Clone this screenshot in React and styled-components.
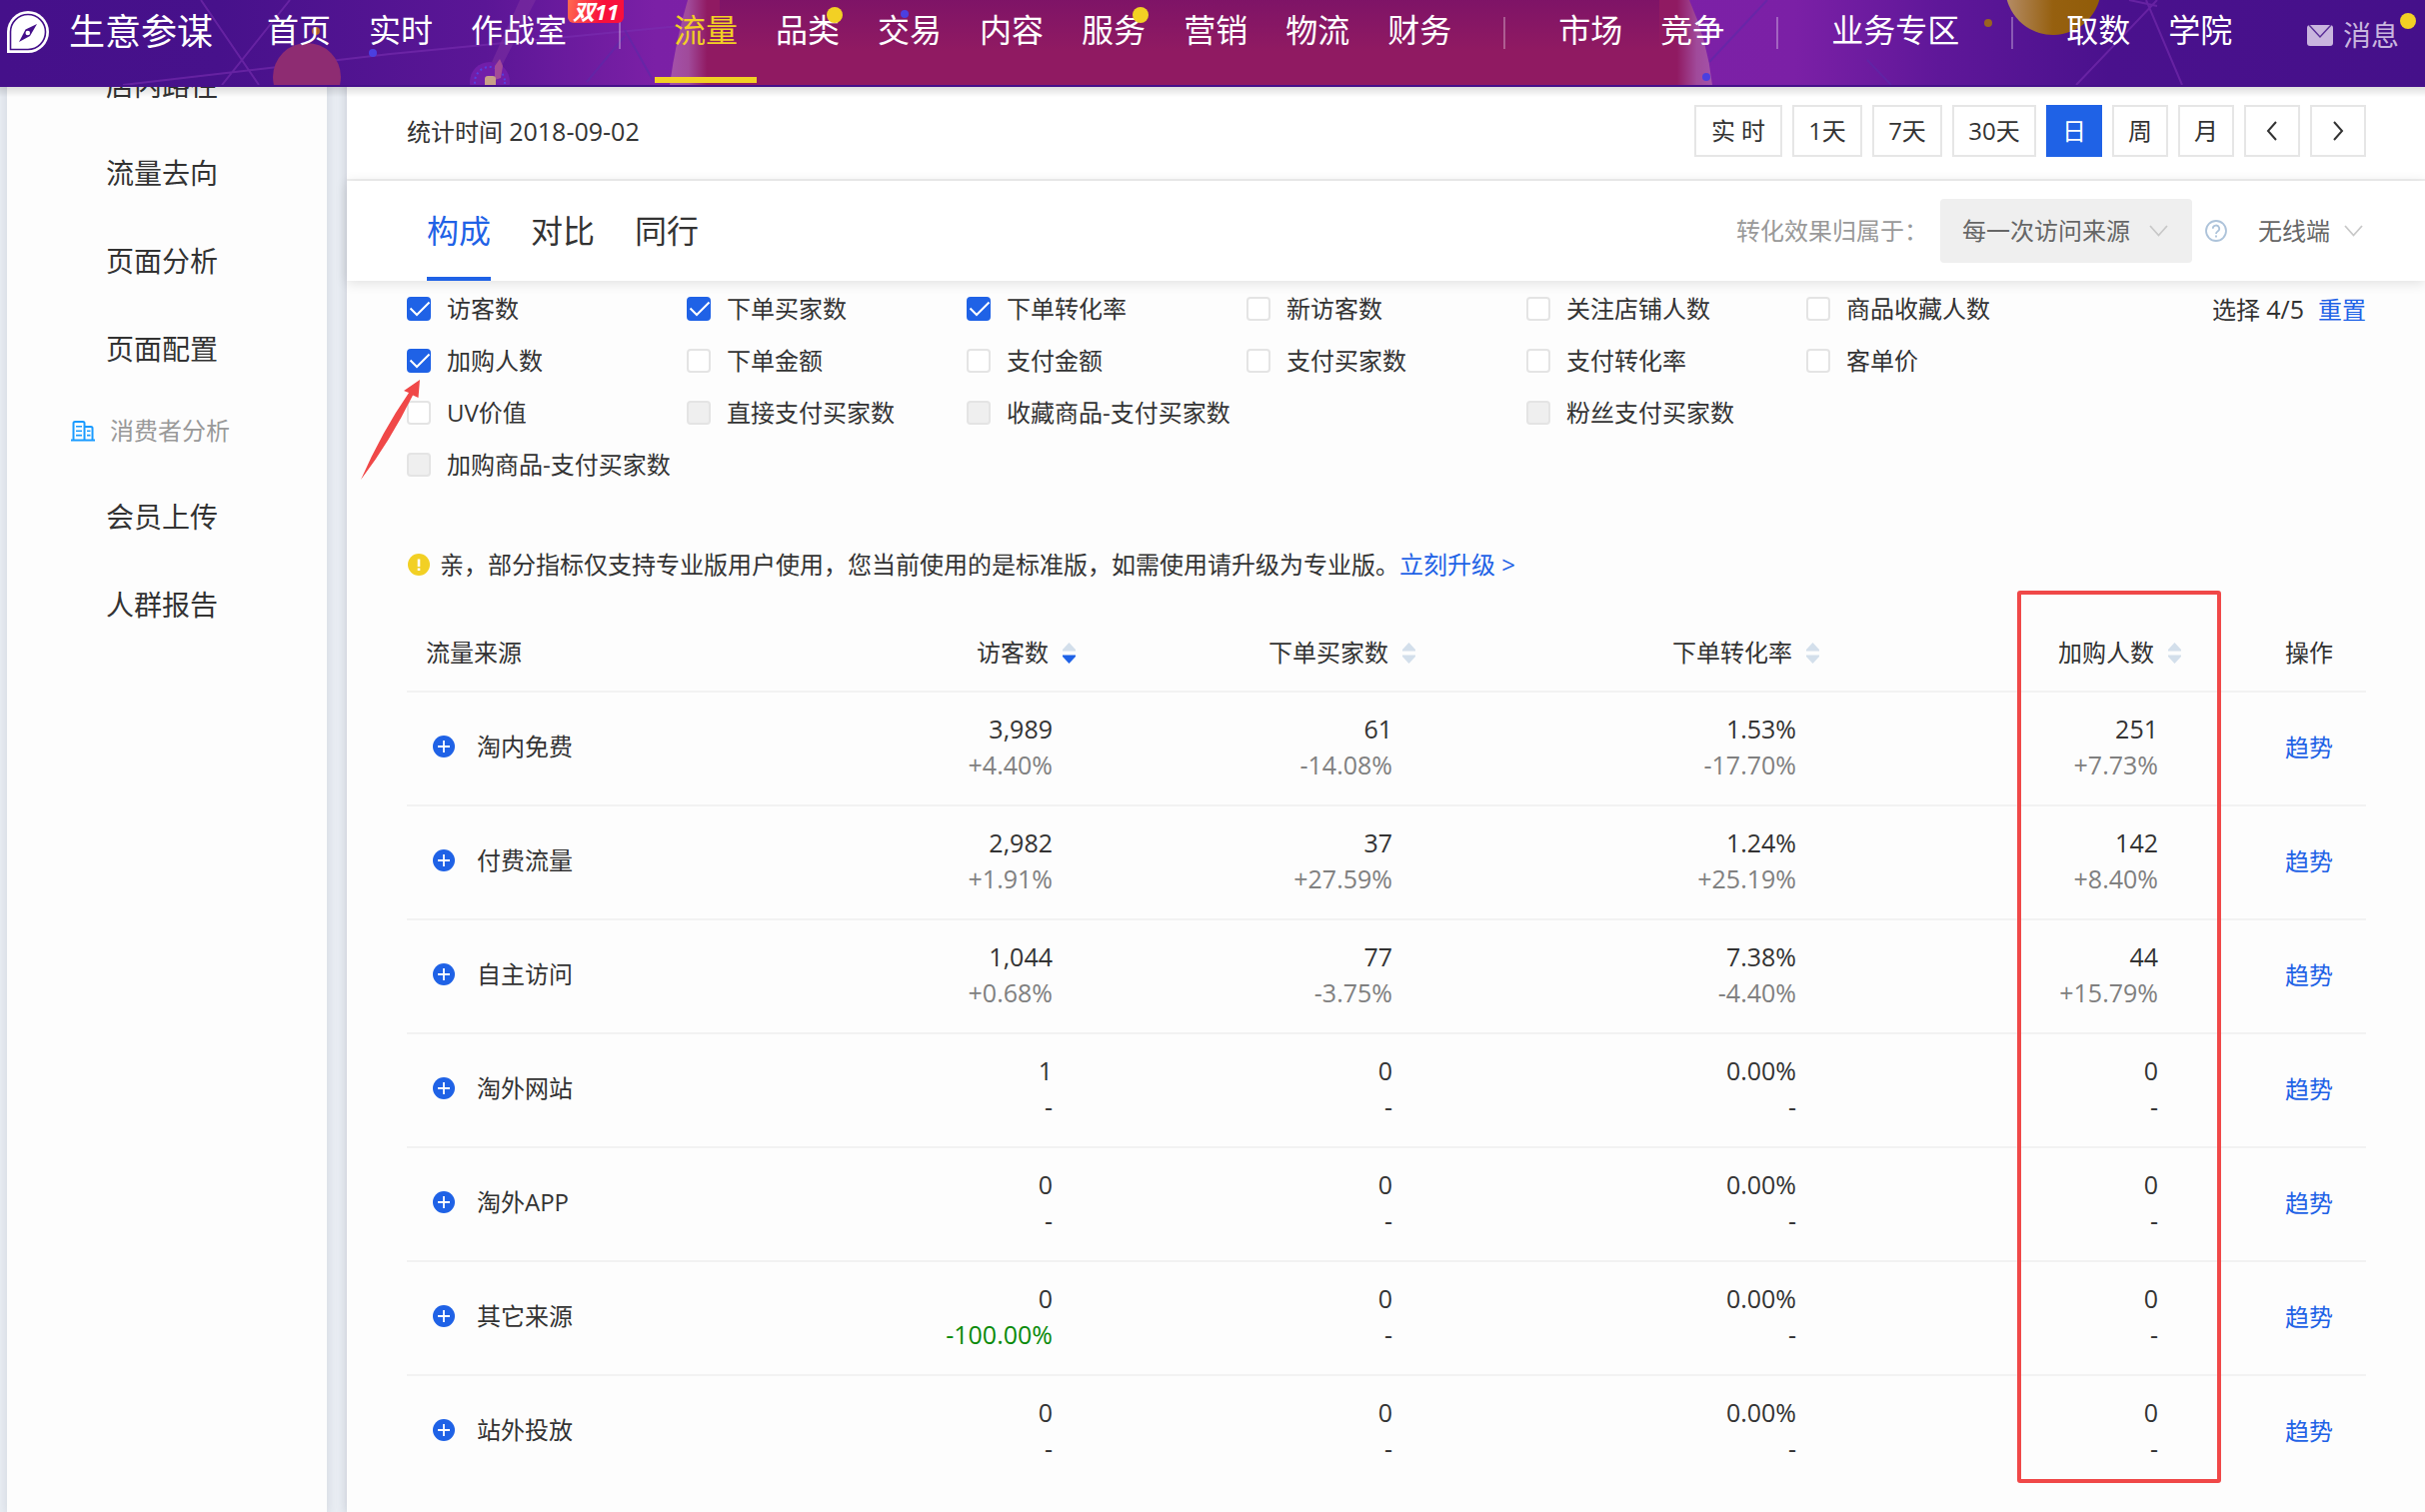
import React from "react";
import styled, { createGlobalStyle, css } from "styled-components";

const BLUE = "#1f62e6";
const RED = "#f04848";
const YELLOW = "#f2d024";

const GlobalStyle = createGlobalStyle`
  *, *::before, *::after { box-sizing: border-box; }
  body {
    margin: 0;
    background: #e9edf3;
    color: #333;
    font-family: "Open Sans", "Noto Sans CJK SC", sans-serif;
    font-size: 24px;
    line-height: 36px;
  }
  button, select, input { font: inherit; color: inherit; margin: 0; }
  button { cursor: pointer; }
`;

/* ---------- header ---------- */

const Header = styled.header`
  position: fixed;
  inset: 0 0 auto 0;
  z-index: 10;
  display: flex;
  align-items: flex-start;
  height: 87px;
  overflow: hidden;
  background: #45108a;
  border-bottom: 2px solid #45108a;
`;

const HeaderShade = styled.div`
  position: fixed;
  inset: 87px 0 auto 0;
  z-index: 9;
  height: 10px;
  background: linear-gradient(rgba(0, 0, 0, 0.13), rgba(0, 0, 0, 0));
`;

const HeaderArt = styled.svg`
  position: absolute;
  inset: 0;
  width: 100%;
  height: 85px;
`;

const Brand = styled.a`
  position: relative;
  display: flex;
  gap: 20px;
  padding-left: 7px;
  width: 248px;
  color: #fff;
  font-size: 36px;
  line-height: 64px;
  text-decoration: none;

  svg {
    margin-top: 11px;
    width: 42px;
    height: 42px;
  }
`;

const Nav = styled.nav`
  position: relative;
  display: flex;
`;

const NavGroup = styled.div`
  display: flex;
  & + &::before {
    content: "";
    width: 2px;
    height: 32px;
    margin: 17px 34px 0 33px;
    background: rgba(255, 255, 255, 0.3);
  }
`;

const NavLink = styled.a`
  position: relative;
  height: 83px;
  padding: 0 19px;
  font-size: 32px;
  line-height: 60px;
  color: ${(p) => (p.$active ? YELLOW : "#fff")};
  border-bottom: 6px solid ${(p) => (p.$active ? YELLOW : "transparent")};
  text-decoration: none;
  white-space: nowrap;
`;

const Dot = styled.i`
  position: absolute;
  top: ${(p) => (p.$low ? 13 : 7)}px;
  right: ${(p) => (p.$low ? -17 : 16)}px;
  width: 16px;
  height: 16px;
  border-radius: 50%;
  background: ${YELLOW};
`;

const SaleTag = styled.span`
  position: absolute;
  top: 0;
  right: -38px;
  width: 56px;
  height: 23px;
  border-radius: 0 0 6px 6px;
  background: linear-gradient(100deg, #ff6a50, #f8103c 60%);
  color: #fff;
  font-size: 22px;
  font-weight: 700;
  font-style: italic;
  line-height: 22px;
  text-align: center;
`;

const Message = styled.a`
  position: relative;
  display: flex;
  align-items: center;
  gap: 10px;
  height: 70px;
  margin: 0 26px 0 auto;
  color: #c9b5de;
  font-size: 28px;
  text-decoration: none;

  svg { width: 26px; height: 21px; }
`;

/* ---------- page ---------- */

const Page = styled.div`
  display: flex;
  gap: 20px;
  min-height: 100vh;
  padding-left: 7px;
`;

const Sidebar = styled.aside`
  flex: 0 0 320px;
  padding-top: 41px;
  background: #fdfdfd;
  box-shadow: 0 0 10px rgba(60, 70, 90, 0.14);
`;

const SideLink = styled.a`
  display: block;
  padding-left: 99px;
  color: #333;
  font-size: 28px;
  line-height: 88px;
  text-decoration: none;
`;

const SideHeading = styled.h2`
  display: flex;
  align-items: center;
  gap: 15px;
  height: 80px;
  margin: 0;
  padding: 0 0 4px 64px;
  color: #999;
  font-size: 24px;
  font-weight: 400;

  svg { width: 24px; height: 22px; }
`;

const Main = styled.main`
  flex: 1;
  min-width: 0;
  padding-top: 87px;
  background: #fdfdfd;
  box-shadow: 0 0 10px rgba(60, 70, 90, 0.22);
`;

const DateBar = styled.div`
  display: flex;
  align-items: center;
  justify-content: space-between;
  height: 94px;
  padding: 0 59px 4px 60px;
  background: #fff;
  border-bottom: 2px solid #f0f0f0;
`;

const Figure = styled.span`
  font-size: 25px;
`;

const ButtonRow = styled.div`
  display: flex;
  gap: 10px;
`;

const RangeButton = styled.button`
  display: flex;
  align-items: center;
  justify-content: center;
  width: ${(p) => p.$width}px;
  height: 52px;
  padding: 0;
  white-space: nowrap;
  background: ${(p) => (p.$active ? BLUE : "#fff")};
  color: ${(p) => (p.$active ? "#fff" : "#333")};
  border: 2px solid ${(p) => (p.$active ? BLUE : "#e6e6e6")};

  svg { width: 12px; height: 20px; }
`;

const TabBar = styled.div`
  position: relative;
  display: flex;
  justify-content: space-between;
  height: 100px;
  padding: 0 59px 0 80px;
  background: #fff;
  box-shadow: 0 2px 12px rgba(0, 0, 0, 0.12);
`;

const Tabs = styled.div`
  display: flex;
  gap: 40px;
`;

const Tab = styled.button`
  height: 100px;
  padding: 4px 0 0;
  background: none;
  border: 0;
  border-bottom: 4px solid ${(p) => (p.$active ? BLUE : "transparent")};
  color: ${(p) => (p.$active ? BLUE : "#333")};
  font-size: 32px;
`;

const Attribution = styled.div`
  display: flex;
  align-items: center;
  color: #999;

  > svg { width: 22px; height: 22px; margin: 0 9px 0 13px; }
`;

const SelectBox = styled.span`
  position: relative;
  display: flex;
  align-items: center;
  margin-left: ${(p) => (p.$filled ? 12 : 0)}px;

  select {
    appearance: none;
    width: ${(p) => (p.$filled ? 252 : 130)}px;
    height: 64px;
    padding: 0 22px;
    border: 0;
    border-radius: 4px;
    background: ${(p) => (p.$filled ? "#efefef" : "transparent")};
    color: #666;
  }
  svg {
    position: absolute;
    right: ${(p) => (p.$filled ? 24 : 3)}px;
    width: 19px;
    height: 12px;
    pointer-events: none;
  }
`;

const Content = styled.div`
  padding: 2px 59px 24px 60px;
`;

const Filters = styled.div`
  display: flex;
  justify-content: space-between;
`;

const FilterGrid = styled.div`
  display: grid;
  grid-template-columns: repeat(6, 280px);
`;

const Option = styled.label`
  display: flex;
  align-items: center;
  gap: 16px;
  height: 52px;
  white-space: nowrap;
  ${(p) => p.$wide && css`grid-column: span 2;`}
`;

const CheckWrap = styled.span`
  display: grid;

  input, svg {
    grid-area: 1 / 1;
    width: 24px;
    height: 24px;
  }
  input {
    appearance: none;
    border: 2px solid #e4e4e4;
    border-radius: 4px;
    background: #fff;
  }
  input:disabled { background: #efefef; }
  input:checked { background: ${BLUE}; border-color: ${BLUE}; }
  svg { visibility: hidden; pointer-events: none; }
  input:checked + svg { visibility: visible; }
`;

const Picked = styled.p`
  margin: 0;
  line-height: 52px;
  white-space: nowrap;
`;

const ResetButton = styled.button`
  margin-left: 14px;
  padding: 0;
  border: 0;
  background: none;
  color: ${BLUE};
`;

const Notice = styled.p`
  display: flex;
  align-items: center;
  margin: 56px 0 32px;

  svg { width: 22px; height: 22px; margin: 0 10px 0 1px; }
`;

const Link = styled.a`
  color: ${BLUE};
  text-decoration: none;
`;

const TableWrap = styled.div`
  position: relative;
`;

const Col = styled.col`
  width: ${(p) => p.$width}px;
`;

const Table = styled.table`
  width: 100%;
  table-layout: fixed;
  border-collapse: separate;
  border-spacing: 0;

  th {
    height: 78px;
    padding: 0;
    font-weight: 400;
    text-align: right;
    border-bottom: 2px solid #f2f2f2;
  }
  td {
    height: 114px;
    padding: 18px 39px 22px 0;
    text-align: right;
    border-bottom: 2px solid #f2f2f2;
  }
  tbody tr:last-child td { border-bottom-color: transparent; }
  th:first-child { padding-left: 19px; text-align: left; }
  td:first-child { padding: 18px 0 22px 26px; text-align: left; }
  td:last-child { padding-bottom: 20px; }
  th:last-child, td:last-child { padding-right: 33px; }
`;

const SortButton = styled.button`
  display: inline-flex;
  align-items: center;
  gap: 14px;
  padding: 0;
  margin-right: 16px;
  border: 0;
  background: none;
  white-space: nowrap;

  svg { width: 13px; height: 21px; }
`;

const SourceName = styled.span`
  display: flex;
  align-items: center;
  gap: 22px;
`;

const ExpandButton = styled.button`
  display: flex;
  padding: 0;
  border: 0;
  background: none;

  svg { width: 22px; height: 22px; }
`;

const Value = styled.div`
  color: #333;
  font-size: 25px;
`;

const CHANGE_COLORS = { drop: "#0a8a0a", none: "#333", normal: "#808080" };

const Change = styled.div`
  color: ${(p) => CHANGE_COLORS[p.$tone]};
  font-size: 25px;
`;

const Highlight = styled.div`
  position: absolute;
  top: -24px;
  right: 145px;
  bottom: 7px;
  width: 204px;
  border: 4px solid ${RED};
  border-radius: 3px;
  pointer-events: none;
`;

const ArrowMark = styled.svg`
  position: absolute;
  top: 380px;
  left: 360px;
  z-index: 2;
  width: 62px;
  height: 101px;
  pointer-events: none;
`;

/* ---------- icons ---------- */

const Compass = () => (
  <svg viewBox="0 0 42 42" aria-hidden="true">
    <path d="M21 0a21 21 0 1 1 0 42H0V21A21 21 0 0 1 21 0z" fill="#fff" />
    <path d="M21 3.500a17.500 17.500 0 1 1 0 35H3.500V21A17.500 17.500 0 0 1 21 3.500z" fill="none" stroke="#45108a" strokeWidth="1.600" />
    <path d="M30 13 23 25 12 31 18.500 18.500z" fill="#45108a" />
    <circle cx="20.800" cy="22" r="2.300" fill="#fff" />
  </svg>
);

const Envelope = () => (
  <svg viewBox="0 0 26 21" aria-hidden="true">
    <rect width="26" height="21" rx="3" fill="#c9b5de" />
    <path d="M2 0 13 12 24 0" fill="none" stroke="#5b2f98" strokeWidth="1.500" />
  </svg>
);

const Building = () => (
  <svg viewBox="0 0 24 22" fill="none" stroke="#1a9bff" strokeWidth="2" aria-hidden="true">
    <path d="M0 20.500h24M2.500 20V3.500a1.500 1.500 0 0 1 1.500-1.500h8a1.500 1.500 0 0 1 1.500 1.500V20M13.500 7h6.500a1.500 1.500 0 0 1 1.500 1.500V20" />
    <path d="M5 6.800h6M5 11.200h6M5 15.600h6M16 11.200h3.500M16 15.600h3.500" strokeWidth="1.600" />
  </svg>
);

const Chevron = () => (
  <svg viewBox="0 0 19 12" fill="none" stroke="#c8c8c8" strokeWidth="1.800" aria-hidden="true">
    <path d="M1 1l8.500 9.500L18 1" />
  </svg>
);

const Step = ({ next }) => (
  <svg viewBox="0 0 12 20" fill="none" stroke="#333" strokeWidth="2" aria-hidden="true">
    <path d={next ? "M2 1l8 9-8 9" : "M10 1 2 10l8 9"} />
  </svg>
);

const Help = () => (
  <svg viewBox="0 0 22 22" fill="none" stroke="#adc3da" strokeWidth="1.800" aria-hidden="true">
    <circle cx="11" cy="11" r="10" />
    <path d="M7.800 8.800a3.200 3.200 0 1 1 4.800 2.700c-1.100.7-1.600 1.200-1.600 2.500M11 15.500v2" />
  </svg>
);

const Warn = () => (
  <svg viewBox="0 0 22 22" aria-hidden="true">
    <circle cx="11" cy="11" r="11" fill={YELLOW} />
    <path d="M11 5.500v7.500M11 14.500v2.500" stroke="#fff" strokeWidth="2.600" />
  </svg>
);

const Plus = () => (
  <svg viewBox="0 0 22 22" aria-hidden="true">
    <circle cx="11" cy="11" r="11" fill={BLUE} />
    <path d="M11 5v12M5 11h12" stroke="#fff" strokeWidth="1.800" />
  </svg>
);

const Tick = () => (
  <svg viewBox="0 0 24 24" fill="none" stroke="#fff" strokeWidth="2" aria-hidden="true">
    <path d="M3.500 11.500 10 18 22.500 5.500" />
  </svg>
);

const SortMark = ({ down }) => (
  <svg viewBox="0 0 13 21" aria-hidden="true">
    <path d="M6.500 0 13 7v1.500H0V7z" fill="#d3dfeb" />
    <path d="M6.500 21 13 14v-1.500H0V14z" fill={down ? BLUE : "#d3dfeb"} />
  </svg>
);

const Backdrop = () => (
  <HeaderArt viewBox="0 0 2426 85" preserveAspectRatio="none" aria-hidden="true">
    <defs>
      <linearGradient id="sky" x1="0" x2="1" y1="0" y2="0">
        <stop offset="0" stopColor="#45108a" />
        <stop offset="0.090" stopColor="#47118b" />
        <stop offset="0.200" stopColor="#5b1696" />
        <stop offset="0.270" stopColor="#7b20a6" />
        <stop offset="0.500" stopColor="#8222a8" />
        <stop offset="0.740" stopColor="#7b20a6" />
        <stop offset="0.800" stopColor="#5f1799" />
        <stop offset="0.870" stopColor="#4a118d" />
        <stop offset="1" stopColor="#45108a" />
      </linearGradient>
      <linearGradient id="disc" x1="0" x2="1" y1="0" y2="0">
        <stop offset="0" stopColor="#a452aa" />
        <stop offset="0.018" stopColor="#a04a9a" />
        <stop offset="0.036" stopColor="#901a62" />
        <stop offset="0.966" stopColor="#901a62" />
        <stop offset="0.985" stopColor="#a04a9a" />
        <stop offset="1" stopColor="#a452aa" />
      </linearGradient>
      <linearGradient id="discTop" x1="0" x2="0" y1="0" y2="1">
        <stop offset="0" stopColor="#7a1268" stopOpacity="0.800" />
        <stop offset="0.600" stopColor="#7a1268" stopOpacity="0" />
      </linearGradient>
      <linearGradient id="planet" x1="0" x2="1" y1="0" y2="0">
        <stop offset="0" stopColor="#b58d68" />
        <stop offset="0.500" stopColor="#96600f" />
        <stop offset="1" stopColor="#915c08" />
      </linearGradient>
    </defs>
    <rect width="2426" height="85" fill="url(#sky)" />
    <g fill="none" stroke="#7a2fb0" strokeOpacity="0.600" strokeWidth="2">
      <path d="M123 85 390 54 680 26M201 0l58 85M290 0l-68 85M2158 0l-81 85M2147 0l36 85M2130 0l28 6" />
      <path d="M625 30l28 50M625 36l-38 46M1768 0l-58 62M1868 60l24 25" stroke="#5b2aa8" />
    </g>
    <path d="M688 0Q676 40 670 85H1713Q1708 40 1690 0z" fill="url(#disc)" />
    <path d="M720 0H1660V85H720z" fill="url(#discTop)" />
    <circle cx="307" cy="77" r="34" fill="#8e2c72" />
    <path d="M492 62 520 0h16L502 66z" fill="#7c2fa0" fillOpacity="0.600" />
    <circle cx="490" cy="82" r="20" fill="#7a22b0" fillOpacity="0.700" />
    <circle cx="490" cy="82" r="15" fill="none" stroke="#5640e0" strokeWidth="2" strokeDasharray="2 3" />
    <path d="M495 80V66l5-7 3 7-2 12z" fill="#a24a98" />
    <path d="M485 85v-6q0-3 3-3h5q3 0 3 3v6z" fill="#c8a088" />
    <circle cx="373" cy="53" r="4" fill="#4b3fe0" />
    <circle cx="316" cy="31" r="4" fill="#b0642c" />
    <circle cx="905" cy="14" r="4" fill="#4b3fe0" />
    <circle cx="1707" cy="77" r="4" fill="#4b3fe0" />
    <circle cx="1989" cy="23" r="4" fill="#9a6420" />
    <circle cx="2054" cy="-13" r="48" fill="url(#planet)" />
  </HeaderArt>
);

/* ---------- data ---------- */

const NAV = [
  [{ text: "首页" }, { text: "实时" }, { text: "作战室", sale: true }],
  [
    { text: "流量", active: true },
    { text: "品类", dot: true },
    { text: "交易" },
    { text: "内容" },
    { text: "服务", dot: true },
    { text: "营销" },
    { text: "物流" },
    { text: "财务" },
  ],
  [{ text: "市场" }, { text: "竞争" }],
  [{ text: "业务专区" }],
  [{ text: "取数" }, { text: "学院" }],
];

const RANGES = [
  ["实 时", 88],
  ["1天", 70],
  ["7天", 70],
  ["30天", 84],
  ["日", 56],
  ["周", 56],
  ["月", 56],
];

const OPTIONS = [
  { text: "访客数", on: true },
  { text: "下单买家数", on: true },
  { text: "下单转化率", on: true },
  { text: "新访客数" },
  { text: "关注店铺人数" },
  { text: "商品收藏人数" },
  { text: "加购人数", on: true },
  { text: "下单金额" },
  { text: "支付金额" },
  { text: "支付买家数" },
  { text: "支付转化率" },
  { text: "客单价" },
  { text: "UV价值" },
  { text: "直接支付买家数", off: true },
  { text: "收藏商品-支付买家数", off: true, wide: true },
  { text: "粉丝支付买家数", off: true },
  { text: "加购商品-支付买家数", off: true, wide: true },
];

const COLUMNS = ["访客数", "下单买家数", "下单转化率", "加购人数"];

const ROWS = [
  ["淘内免费", ["3,989", "+4.40%"], ["61", "-14.08%"], ["1.53%", "-17.70%"], ["251", "+7.73%"]],
  ["付费流量", ["2,982", "+1.91%"], ["37", "+27.59%"], ["1.24%", "+25.19%"], ["142", "+8.40%"]],
  ["自主访问", ["1,044", "+0.68%"], ["77", "-3.75%"], ["7.38%", "-4.40%"], ["44", "+15.79%"]],
  ["淘外网站", ["1", "-"], ["0", "-"], ["0.00%", "-"], ["0", "-"]],
  ["淘外APP", ["0", "-"], ["0", "-"], ["0.00%", "-"], ["0", "-"]],
  ["其它来源", ["0", "-100.00%"], ["0", "-"], ["0.00%", "-"], ["0", "-"]],
  ["站外投放", ["0", "-"], ["0", "-"], ["0.00%", "-"], ["0", "-"]],
];

const toneOf = (change) => {
  if (change === "-") return "none";
  return change === "-100.00%" ? "drop" : "normal";
};

export default function App() {
  return (
    <>
      <GlobalStyle />
      <Header>
        <Backdrop />
        <Brand href="#home">
          <Compass />
          生意参谋
        </Brand>
        <Nav>
          {NAV.map((group) => (
            <NavGroup key={group[0].text}>
              {group.map((item) => (
                <NavLink key={item.text} href="#nav" $active={item.active}>
                  {item.text}
                  {item.dot && <Dot />}
                  {item.sale && <SaleTag>双11</SaleTag>}
                </NavLink>
              ))}
            </NavGroup>
          ))}
        </Nav>
        <Message href="#messages">
          <Envelope />
          消息
          <Dot $low />
        </Message>
      </Header>
      <HeaderShade />

      <Page>
        <Sidebar>
          {["店内路径", "流量去向", "页面分析", "页面配置"].map((text) => (
            <SideLink key={text} href="#side">{text}</SideLink>
          ))}
          <SideHeading>
            <Building />
            消费者分析
          </SideHeading>
          {["会员上传", "人群报告"].map((text) => (
            <SideLink key={text} href="#side">{text}</SideLink>
          ))}
        </Sidebar>

        <Main>
          <DateBar>
            <span>统计时间 <Figure>2018-09-02</Figure></span>
            <ButtonRow>
              {RANGES.map(([text, width]) => (
                <RangeButton key={text} type="button" $width={width} $active={text === "日"}>
                  {text}
                </RangeButton>
              ))}
              <RangeButton type="button" $width={56} aria-label="上一日"><Step /></RangeButton>
              <RangeButton type="button" $width={56} aria-label="下一日"><Step next /></RangeButton>
            </ButtonRow>
          </DateBar>

          <TabBar>
            <Tabs>
              <Tab type="button" $active>构成</Tab>
              <Tab type="button">对比</Tab>
              <Tab type="button">同行</Tab>
            </Tabs>
            <Attribution>
              <label htmlFor="source">转化效果归属于：</label>
              <SelectBox $filled>
                <select id="source"><option>每一次访问来源</option></select>
                <Chevron />
              </SelectBox>
              <Help />
              <SelectBox>
                <select aria-label="终端"><option>无线端</option></select>
                <Chevron />
              </SelectBox>
            </Attribution>
          </TabBar>

          <Content>
            <Filters>
              <FilterGrid>
                {OPTIONS.map((o) => (
                  <Option key={o.text} $wide={o.wide}>
                    <CheckWrap>
                      <input type="checkbox" defaultChecked={o.on} disabled={o.off} />
                      <Tick />
                    </CheckWrap>
                    {o.text}
                  </Option>
                ))}
              </FilterGrid>
              <Picked>
                选择 <Figure>4/5</Figure>
                <ResetButton type="button">重置</ResetButton>
              </Picked>
            </Filters>

            <Notice>
              <Warn />
              亲，部分指标仅支持专业版用户使用，您当前使用的是标准版，如需使用请升级为专业版。
              <Link href="#upgrade">立刻升级 &gt;</Link>
            </Notice>

            <TableWrap>
              <Table>
                <colgroup>
                  <Col $width={400} />
                  <col />
                  <Col $width={340} />
                  <Col $width={404} />
                  <Col $width={362} />
                  <Col $width={169} />
                </colgroup>
                <thead>
                  <tr>
                    <th>流量来源</th>
                    {COLUMNS.map((text, i) => (
                      <th key={text}>
                        <SortButton type="button">
                          {text}
                          <SortMark down={i === 0} />
                        </SortButton>
                      </th>
                    ))}
                    <th>操作</th>
                  </tr>
                </thead>
                <tbody>
                  {ROWS.map(([name, ...cells]) => (
                    <tr key={name}>
                      <td>
                        <SourceName>
                          <ExpandButton type="button" aria-label={"展开" + name}><Plus /></ExpandButton>
                          {name}
                        </SourceName>
                      </td>
                      {cells.map(([value, change], i) => (
                        <td key={COLUMNS[i]}>
                          <Value>{value}</Value>
                          <Change $tone={toneOf(change)}>{change}</Change>
                        </td>
                      ))}
                      <td><Link href="#trend">趋势</Link></td>
                    </tr>
                  ))}
                </tbody>
              </Table>
              <Highlight />
            </TableWrap>
          </Content>
        </Main>
      </Page>
      <ArrowMark viewBox="0 0 62 101" aria-hidden="true">
        <path d="M60 0 58.500 18 53 15.500Q30 62 1 100 22 52 49 13L44 11z" fill={RED} />
      </ArrowMark>
    </>
  );
}
